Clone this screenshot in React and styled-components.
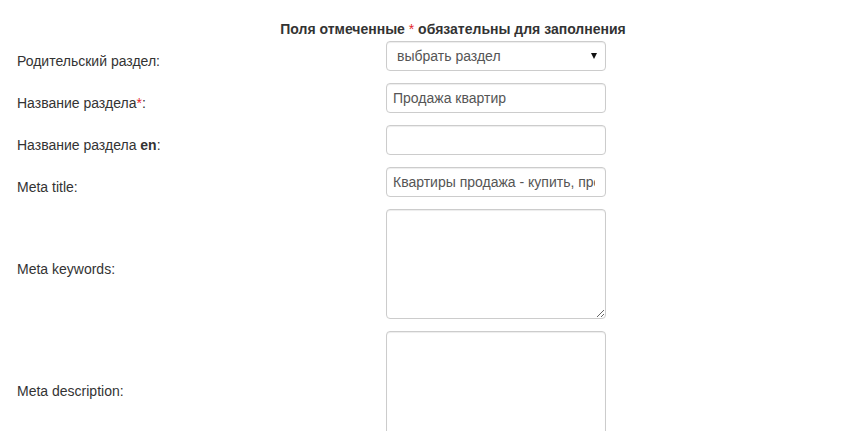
import React from "react";
import styled, { createGlobalStyle } from "styled-components";

const Global = createGlobalStyle`
  html, body { margin: 0; padding: 0; background: #fff; }
  body { font-family: "Liberation Sans", Arial, sans-serif; color: #333; font-size: 14px; }
`;

const Page = styled.div`
  width: 848px;
  height: 431px;
  overflow: hidden;
  padding: 19px 0 0 17px;
  box-sizing: border-box;
`;

const Heading = styled.div`
  width: 872px;
  text-align: center;
  font-weight: bold;
  font-size: 14px;
  line-height: 20px;
  color: #333;
  margin-bottom: 2px;
`;

const Req = styled.span`
  color: #e4252c;
  font-weight: normal;
`;

const Form = styled.div`
  display: grid;
  grid-template-columns: 369px 220px;
  row-gap: 12px;
  align-items: center;
`;

const Label = styled.div`
  font-size: 14px;
  line-height: 18px;
  padding-top: 9px;
  color: #333;
  b { font-weight: bold; }
`;

const fieldBase = `
  box-sizing: border-box;
  width: 220px;
  border: 1px solid #ccc;
  border-radius: 4px;
  box-shadow: inset 0 1px 1px rgba(0,0,0,0.075);
  background: #fff;
  font-family: "Liberation Sans", Arial, sans-serif;
  font-size: 14px;
  color: #555;
  outline: none;
  margin: 0;
`;

const Input = styled.input`
  ${fieldBase}
  height: 30px;
  padding: 0 10px 0 6px;
`;

const SelectBox = styled.div`
  ${fieldBase}
  height: 30px;
  padding: 0 8px 0 10px;
  display: flex;
  align-items: center;
  justify-content: space-between;
`;

const Arrow = styled.span`
  width: 0;
  height: 0;
  border-left: 3.5px solid transparent;
  border-right: 3.5px solid transparent;
  border-top: 6px solid #111;
`;

const Area = styled.textarea`
  ${fieldBase}
  height: ${(p) => p.$h}px;
  padding: 6px;
  resize: vertical;
  display: block;
`;

export default function App() {
  return (
    <Page>
      <Global />
      <Heading>
        Поля отмеченные <Req>*</Req> обязательны для заполнения
      </Heading>
      <Form>
        <Label>Родительский раздел:</Label>
        <SelectBox>
          <span>выбрать раздел</span>
          <Arrow />
        </SelectBox>

        <Label>
          Название раздела<Req>*</Req>:
        </Label>
        <Input defaultValue="Продажа квартир" />

        <Label>
          Название раздела <b>en</b>:
        </Label>
        <Input defaultValue="" />

        <Label>Meta title:</Label>
        <Input defaultValue="Квартиры продажа - купить, продать квартиру" />

        <Label>Meta keywords:</Label>
        <Area $h={110} defaultValue="" />

        <Label>Meta description:</Label>
        <Area $h={110} defaultValue="" />
      </Form>
    </Page>
  );
}
